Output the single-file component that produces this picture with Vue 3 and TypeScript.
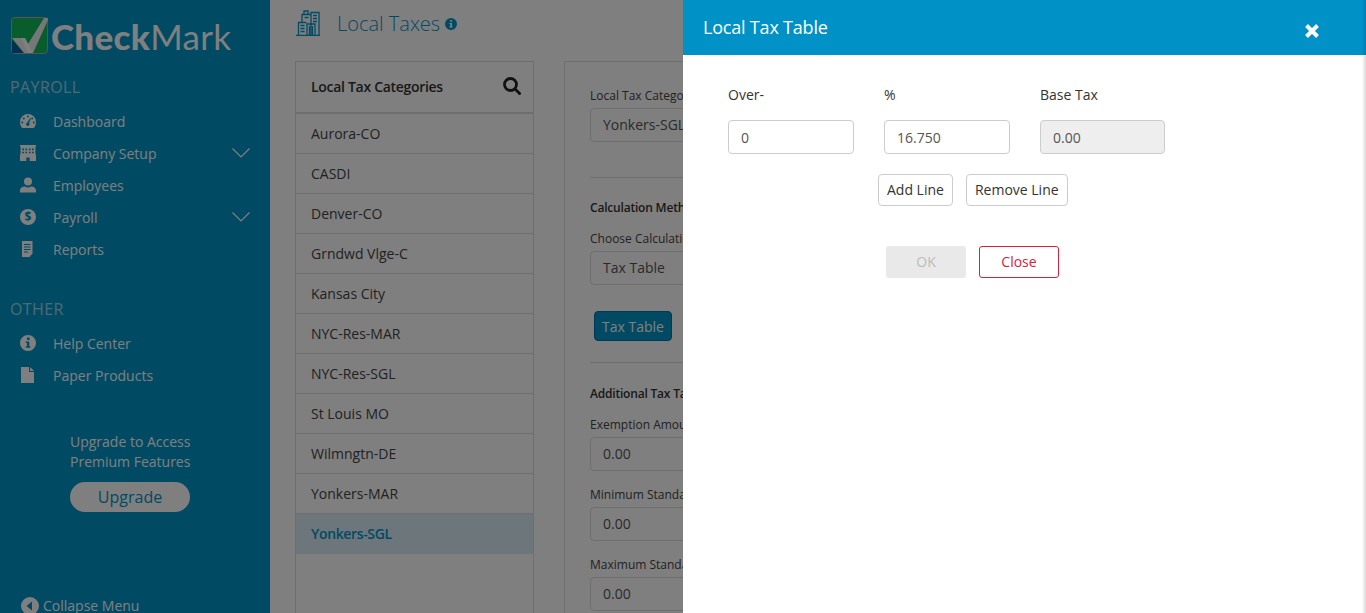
<script setup lang="ts">
const taxes: string[] = [
  "Aurora-CO", "CASDI", "Denver-CO", "Grndwd Vlge-C", "Kansas City", "NYC-Res-MAR",
  "NYC-Res-SGL", "St Louis MO", "Wilmngtn-DE", "Yonkers-MAR", "Yonkers-SGL",
];
</script>

<template>
  <div class="page">
    <aside class="sidebar">
      <div class="logo">
        <svg class="logo-mark" width="37" height="37" viewBox="0 0 37 37">
          <rect x="0.5" y="0.5" width="36" height="36" rx="3" fill="#12b858" stroke="#aaa" />
          <path d="M1 23 L1 36 L13 36 Z" fill="#0060a8" />
          <path d="M1 21 L14 21 L17 27 L33 1 L37 1 L37 3 L22 36 L13 36 Z" fill="#eee" />
          <path d="M14 21 L22 36 L17 36 L10 21 Z" fill="#fff" />
        </svg>
        <span class="logo-text"><b>Check</b>Mark</span>
      </div>

      <div class="group-title">PAYROLL</div>
      <a class="nav-item">
        <svg class="nav-icon" viewBox="0 0 16 14"><path fill-rule="evenodd" d="M8 0a8 8 0 0 1 8 8c0 2.200-.7 4-1.700 5.500-.2.300-.5.500-.9.500H2.600c-.4 0-.7-.2-.9-.5C.7 12 0 10.200 0 8a8 8 0 0 1 8-8zM8 1.600a1 1 0 1 0 0 2 1 1 0 0 0 0-2zM3.800 3.400a1 1 0 1 0 0 2 1 1 0 0 0 0-2zM12.200 3.400a1 1 0 1 0 0 2 1 1 0 0 0 0-2zM2.200 7.400a1 1 0 1 0 0 2 1 1 0 0 0 0-2zM13.800 7.400a1 1 0 1 0 0 2 1 1 0 0 0 0-2zM10.300 4 7.300 8.600a1.700 1.700 0 1 0 1.800.5L11 4.300z" /></svg>
        <span>Dashboard</span>
      </a>
      <a class="nav-item">
        <svg class="nav-icon" viewBox="0 0 14 14"><path fill-rule="evenodd" d="M0 0h14v1.500h-.5V8H14v6H8.500v-3h-3v3H0V8h.5V1.500H0zM2 3v1.500h1.500V3zM4.700 3v1.500h1.500V3zM7.800 3v1.500h1.500V3zM10.500 3v1.500H12V3zM2 5.800v1.500h1.500V5.800zM4.700 5.800v1.500h1.500V5.800zM7.800 5.800v1.500h1.500V5.800zM10.500 5.800v1.500H12V5.800z" /></svg>
        <span>Company Setup</span>
        <svg class="chevron" width="18" height="10" viewBox="0 0 18 10"><path d="M.5.5 9 9 17.500.5" fill="none" stroke="currentColor" stroke-width="1.200" /></svg>
      </a>
      <a class="nav-item">
        <svg class="nav-icon" viewBox="0 0 16 15"><circle cx="8" cy="4" r="4" /><path d="M0 15v-2c0-2.500 2.500-4 5-4 1 .8 2 1.100 3 1.100s2-.3 3-1.100c2.500 0 5 1.500 5 4v2z" /></svg>
        <span>Employees</span>
      </a>
      <a class="nav-item">
        <svg class="nav-icon" viewBox="0 0 16 16"><circle cx="8" cy="8" r="8" /><text x="8" y="12" text-anchor="middle" class="dollar">$</text></svg>
        <span>Payroll</span>
        <svg class="chevron" width="18" height="10" viewBox="0 0 18 10"><path d="M.5.5 9 9 17.500.5" fill="none" stroke="currentColor" stroke-width="1.200" /></svg>
      </a>
      <a class="nav-item">
        <svg class="nav-icon" viewBox="0 0 16 16"><path fill-rule="evenodd" d="M2 0h10.500v12.500L9.500 16H2zM4 3v1h6.500V3zM4 5.500v1h6.500v-1zM4 8v1h6.500V8zM4 10.500v1h4v-1z" /></svg>
        <span>Reports</span>
      </a>

      <div class="group-title other">OTHER</div>
      <a class="nav-item">
        <svg class="nav-icon" viewBox="0 0 16 16"><path fill-rule="evenodd" d="M8 0a8 8 0 1 1 0 16A8 8 0 0 1 8 0zM7 2.600v2.400h2.500V2.600zM5.800 6.500v1.400H7v3.400H5.800v1.400h4.500v-1.400H9.300V6.500z" /></svg>
        <span>Help Center</span>
      </a>
      <a class="nav-item">
        <svg class="nav-icon" viewBox="0 0 16 16"><path d="M1 0h8v5h5v11H1zM10 0l4 4h-4z" /></svg>
        <span>Paper Products</span>
      </a>

      <div class="upgrade">
        <p>Upgrade to Access<br />Premium Features</p>
        <button class="upgrade-btn">Upgrade</button>
      </div>

      <div class="collapse">
        <svg width="18" height="18" viewBox="0 0 18 18"><path fill-rule="evenodd" fill="currentColor" d="M9 0a9 9 0 1 1 0 18A9 9 0 0 1 9 0zM11 4.500 5.500 9l5.500 4.500z" /></svg>
        <span>Collapse Menu</span>
      </div>
    </aside>

    <main class="content">
      <div class="page-head">
        <svg class="head-icon" width="24" height="26" viewBox="0 0 24 26" fill="none" stroke="#0095c8" stroke-width="1.300">
          <path d="M0 25.400h24M2.500 25V12.500h8M6 12.500V4.500h9M8 4.500V1h4v3.500M15 25V2.500h8V25M11 25V14h8V25M13.500 16v9M16.500 16v9M4.500 15.500h4M4.500 18.500h4M4.500 21.500h4M17 5.500h4M17 8.500h4M17 11.500h4M8.500 7.500h4" />
        </svg>
        <h1>Local Taxes</h1>
        <svg class="head-info" width="12" height="12" viewBox="0 0 16 16"><path fill-rule="evenodd" fill="#0095c8" d="M8 0a8 8 0 1 1 0 16A8 8 0 0 1 8 0zM7 2.600v2.400h2.500V2.600zM5.800 6.500v1.400H7v3.400H5.800v1.400h4.500v-1.400H9.300V6.500z" /></svg>
      </div>

      <div class="panels">
        <section class="list-panel">
          <div class="list-head">
            <span>Local Tax Categories</span>
            <svg width="18" height="18" viewBox="0 0 18 18" fill="none" stroke="#222" stroke-width="2.800">
              <circle cx="7.500" cy="7.500" r="6" /><path d="M12 12l4.600 4.600" stroke-linecap="round" />
            </svg>
          </div>
          <div v-for="t in taxes" :key="t" :class="['list-row', { active: t === 'Yonkers-SGL' }]">{{ t }}</div>
        </section>

        <section class="form-panel">
          <label class="first">Local Tax Category</label>
          <div class="field">Yonkers-SGL</div>
          <hr class="rule-a" />
          <h4>Calculation Method</h4>
          <label>Choose Calculation Method</label>
          <div class="field">Tax Table</div>
          <button class="table-btn">Tax Table</button>
          <hr class="rule-b" />
          <h4>Additional Tax Table Info</h4>
          <label>Exemption Amount</label>
          <div class="field">0.00</div>
          <label class="gap">Minimum Standard Deduction</label>
          <div class="field">0.00</div>
          <label class="gap">Maximum Standard Deduction</label>
          <div class="field">0.00</div>
        </section>
      </div>
    </main>

    <div class="overlay"></div>

    <div class="modal">
      <header class="modal-head">
        <h2>Local Tax Table</h2>
        <svg class="close-x" width="16" height="16" viewBox="0 0 16 16"><path d="M2.500 2.500l11 11M13.500 2.500l-11 11" stroke="#fff" stroke-width="4" /></svg>
      </header>
      <div class="modal-body">
        <div class="tax-grid">
          <span>Over-</span>
          <span>%</span>
          <span>Base Tax</span>
          <input class="cell" value="0" />
          <input class="cell" value="16.750" />
          <input class="cell" value="0.00" disabled />
        </div>
        <div class="line-btns">
          <button>Add Line</button>
          <button>Remove Line</button>
        </div>
        <div class="modal-actions">
          <button class="ok" disabled>OK</button>
          <button class="close">Close</button>
        </div>
      </div>
    </div>
  </div>
</template>

<style>
html, body { margin: 0; overflow: hidden; }
</style>

<style scoped>
* { box-sizing: border-box; }

.page {
  position: relative;
  display: flex;
  width: 1366px;
  height: 613px;
  overflow: hidden;
  font-family: "Open Sans", sans-serif;
  font-size: 14px;
  color: #333;
  background: #fff;
}

/* Sidebar */
.sidebar {
  position: relative;
  width: 270px;
  flex: none;
  background: #0095c8;
  color: #fff;
}
.logo {
  display: flex;
  align-items: center;
  padding: 11px 0 0 11px;
  height: 60px;
}
.logo-text {
  margin-left: 3px;
  font-family: Lato, sans-serif;
  font-size: 35px;
  line-height: 38px;
  letter-spacing: 0.3px;
  color: #fff;
}
.logo-text b { font-weight: 900; }
.group-title {
  margin: 17px 0 0 10px;
  font-size: 16px;
  line-height: 20px;
  letter-spacing: 0.4px;
  opacity: 0.6;
}
.group-title.other { margin-top: 34px; }
.nav-item {
  display: flex;
  align-items: center;
  height: 32px;
  padding-left: 20px;
  color: #fff;
}
.group-title + .nav-item { margin-top: 8px; }
.nav-icon {
  width: 16px;
  height: 16px;
  flex: none;
  margin-right: 17px;
  fill: #fff;
}
.dollar { font-family: "Open Sans", sans-serif; font-size: 12px; font-weight: 700; fill: #0095c8; }
.chevron { margin-left: auto; margin-right: 20px; }
.upgrade {
  margin: 41px 0 0 70px;
  width: 120px;
}
.upgrade p {
  margin: 0 0 10px;
  line-height: 20px;
  color: #fff;
  white-space: nowrap;
}
.upgrade-btn {
  display: block;
  width: 120px;
  height: 30px;
  padding: 0;
  border: 0;
  border-radius: 15px;
  background: #fff;
  color: #0095c8;
  font-family: inherit;
  font-size: 16px;
}
.collapse {
  position: absolute;
  left: 21px;
  top: 596px;
  display: flex;
  align-items: center;
  gap: 4px;
  color: #fff;
}

/* Main */
.content {
  flex: 1;
  min-width: 0;
  padding: 0 0 0 25px;
}
.page-head {
  display: flex;
  align-items: center;
  height: 46px;
}
.head-icon { margin: 0 17px 0 1px; }
.page-head h1 {
  margin: 0;
  font-size: 20px;
  font-weight: 300;
  color: #0095c8;
}
.head-info { margin-left: 5px; margin-top: 2px; }
.panels {
  display: flex;
  gap: 30px;
  margin-top: 15px;
}
.list-panel {
  width: 239px;
  height: 560px;
  border: 1px solid #ddd;
  flex: none;
}
.list-head {
  display: flex;
  align-items: center;
  justify-content: space-between;
  height: 52px;
  padding: 0 12px 2px 15px;
  border-bottom: 2px solid #ddd;
  font-weight: 600;
  letter-spacing: -0.3px;
  color: #333;
}
.list-row {
  height: 40px;
  padding-left: 15px;
  line-height: 40px;
  border-bottom: 1px solid #ddd;
  color: #444;
}
.list-row.active {
  background: #d9edf7;
  color: #0095c8;
  font-weight: 600;
  letter-spacing: -0.35px;
  border-bottom: 0;
}
.form-panel {
  width: 400px;
  height: 560px;
  padding: 25px 25px 0;
  border: 1px solid #ddd;
  flex: none;
}
.form-panel label {
  display: block;
  font-size: 12px;
  line-height: 18px;
  color: #444;
  white-space: nowrap;
}
.form-panel label.gap { margin-top: 15px; }
.form-panel h4 {
  margin: 0 0 13px;
  font-size: 12px;
  line-height: 18px;
  font-weight: 600;
  letter-spacing: -0.2px;
  color: #333;
  white-space: nowrap;
}
.form-panel hr {
  height: 1px;
  margin: 0;
  border: 0;
  background: #ddd;
}
.form-panel .rule-a { margin: 35px 0 21px; }
.form-panel .rule-b { margin: 21px 0 22px; }
.field {
  height: 34px;
  margin-top: 3px;
  padding-left: 12px;
  border: 1px solid #ddd;
  border-radius: 4px;
  line-height: 31px;
  color: #555;
}
.table-btn {
  display: block;
  width: 78px;
  height: 30px;
  margin: 26px 0 0 4px;
  padding: 0;
  border: 1px solid #0b6fb0;
  border-radius: 4px;
  background: #0095c8;
  color: #fff;
  font-family: inherit;
  font-size: 14px;
}

/* Modal */
.overlay {
  position: absolute;
  inset: 0;
  background: rgba(0, 0, 0, 0.5);
}
.modal {
  position: absolute;
  top: 0;
  right: 0;
  bottom: 0;
  width: 683px;
  background: #fff;
}
.modal::after {
  content: "";
  position: absolute;
  top: 0;
  right: 0;
  bottom: 0;
  width: 4px;
  background: linear-gradient(to right, rgba(0, 0, 0, 0), rgba(0, 0, 0, 0.15));
}
.modal-head {
  display: flex;
  align-items: center;
  justify-content: space-between;
  height: 55px;
  padding: 0 46px 0 20px;
  background: #0091c7;
  color: #fff;
}
.modal-head h2 {
  margin: 0 0 1px;
  font-size: 18px;
  font-weight: 400;
  letter-spacing: -0.2px;
}
.close-x { margin-top: 7px; }
.modal-body { padding: 30px 0 0 45px; }
.tax-grid {
  display: grid;
  grid-template-columns: 126px 126px 125px;
  column-gap: 30px;
  row-gap: 15px;
  font-size: 14px;
  line-height: 20px;
}
.cell {
  width: 100%;
  height: 34px;
  padding: 0 12px;
  border: 1px solid #ccc;
  border-radius: 4px;
  background: #fff;
  color: #555;
  font-family: inherit;
  font-size: 14px;
  outline: 0;
}
.cell:disabled { background: #eee; }
.line-btns {
  display: flex;
  gap: 13px;
  margin: 20px 0 0 150px;
}
.line-btns button {
  height: 32px;
  padding: 0 8px 2px;
  border: 1px solid #ccc;
  border-radius: 4px;
  background: #fff;
  color: #333;
  font-family: inherit;
  font-size: 14px;
}
.modal-actions {
  display: flex;
  gap: 13px;
  margin: 40px 0 0 158px;
}
.modal-actions button {
  width: 80px;
  height: 32px;
  padding: 0 0 2px;
  border-radius: 3px;
  font-family: inherit;
  font-size: 14px;
}
.ok {
  border: 0;
  background: #e9e9e9;
  color: #bbb;
}
.close {
  border: 1px solid #d9213b;
  background: #fff;
  color: #d9213b;
}
</style>
